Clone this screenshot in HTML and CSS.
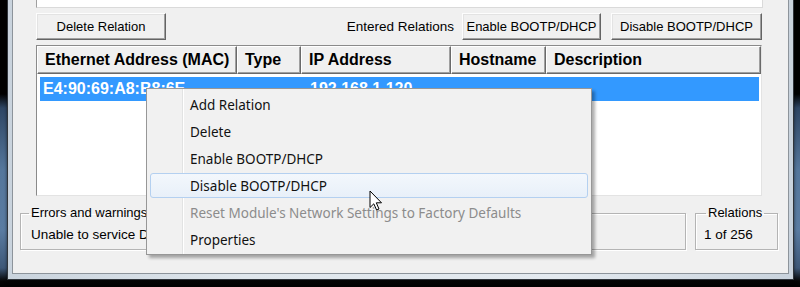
FILE: index.html
```html
<!DOCTYPE html>
<html>
<head>
<meta charset="utf-8">
<title>BOOTP/DHCP Server</title>
<link rel="stylesheet" href="styles.css">
</head>
<body>
<div class="window">
  <div class="client">
    <div class="topbox"></div>
    <div class="toolbar">
      <button class="btn btn-delete">Delete Relation</button>
      <span class="tb-label">Entered Relations</span>
      <button class="btn btn-enable">Enable BOOTP/DHCP</button>
      <button class="btn btn-disable">Disable BOOTP/DHCP</button>
    </div>
    <div class="listview">
      <div class="lv-header">
        <div class="hcell h1">Ethernet Address (MAC)</div>
        <div class="hcell h2">Type</div>
        <div class="hcell h3">IP Address</div>
        <div class="hcell h4">Hostname</div>
        <div class="hcell h5">Description</div>
      </div>
      <div class="lv-row selected">
        <span class="rcell r1">E4:90:69:A8:B8:6E</span>
        <span class="rcell r2"></span>
        <span class="rcell r3">192.168.1.120</span>
      </div>
    </div>
    <div class="status">
      <fieldset class="group errors">
        <legend>Errors and warnings</legend>
        <div class="gtext">Unable to service DHCP request from E4:90:69:A8:B8:6E.</div>
      </fieldset>
      <fieldset class="group relations">
        <legend>Relations</legend>
        <div class="gtext">1 of 256</div>
      </fieldset>
    </div>
  </div>
</div>

<ul class="ctxmenu">
  <li class="mi">Add Relation</li>
  <li class="mi">Delete</li>
  <li class="mi">Enable BOOTP/DHCP</li>
  <li class="mi hover">Disable BOOTP/DHCP</li>
  <li class="mi disabled">Reset Module's Network Settings to Factory Defaults</li>
  <li class="mi">Properties</li>
</ul>

<svg class="cursor" width="14" height="22" viewBox="0 0 14 22">
  <path d="M1 1 L1 17.5 L4.8 13.8 L7.6 20 L10 19 L7.3 12.8 L12.5 12.8 Z" fill="#fff" stroke="#000" stroke-width="1" stroke-linejoin="round"/>
</svg>
</body>
</html>
```

FILE: styles.css
```css
html, body {
  margin: 0;
  padding: 0;
  width: 800px;
  height: 287px;
  overflow: hidden;
}
body {
  position: relative;
  font-family: "Liberation Sans", Arial, sans-serif;
  font-size: 13px;
  color: #000;
  background: linear-gradient(to bottom, #000 0px, #000 94px, #2e4664 108px, #55779c 170px, #5a7ca2 230px, #3e5878 268px, #050505 281px, #000 287px);
}

.window {
  margin-left: 7px;
  width: 787px;
  height: 280px;
  box-sizing: border-box;
  border: 1px solid #30353b;
  border-top: none;
  padding: 0 4px 5px 4px;
  background: linear-gradient(to right, #c9d3dd, #dfe6ec 30%, #e3e9ef 70%, #c9d3dd);
  box-shadow: 0 2px 3px rgba(0,0,0,0.6);
}

.client {
  height: 100%;
  box-sizing: border-box;
  border: 1px solid #8d949b;
  border-top: none;
  background: #f0f0f0;
  display: flex;
  flex-direction: column;
}

.topbox {
  margin-left: 23px;
  width: 727px;
  height: 8px;
  box-sizing: border-box;
  background: #fff;
  border-left: 1px solid #a0a0a0;
  border-right: 1px solid #dadada;
  border-bottom: 1px solid #dadada;
}

.toolbar {
  margin-top: 5px;
  height: 27px;
  display: flex;
  align-items: stretch;
  padding-left: 23px;
  padding-right: 26px;
}

.btn {
  font-family: "Liberation Sans", Arial, sans-serif;
  font-size: 13px;
  color: #000;
  background: #f0f0f0;
  box-sizing: border-box;
  height: 27px;
  padding: 0;
  border: 1px solid;
  border-color: #fdfdfd #646464 #646464 #fdfdfd;
  box-shadow: inset -1px -1px 0 #a0a0a0, inset 1px 1px 0 #e3e3e3;
  border-radius: 0;
}
.btn-delete { width: 130px; }
.btn-enable { width: 139px; }
.btn-disable { width: 151px; margin-left: 10px; }

.tb-label {
  margin-left: auto;
  margin-right: 8px;
  align-self: center;
  font-size: 13.5px;
  line-height: 16px;
}

.listview {
  margin-top: 5px;
  margin-left: 23px;
  width: 726px;
  height: 151px;
  box-sizing: border-box;
  background: #fff;
  border: 1px solid;
  border-color: #8a8a8a #e3e3e3 #e3e3e3 #8a8a8a;
  display: flex;
  flex-direction: column;
}

.lv-header {
  display: flex;
  height: 28px;
  flex: none;
}
.hcell {
  box-sizing: border-box;
  height: 28px;
  background: #f0f0f0;
  border: 1px solid;
  border-color: #fff #6a6a6a #6a6a6a #fff;
  box-shadow: inset -1px -1px 0 #a0a0a0;
  font-weight: bold;
  font-size: 16px;
  line-height: 25px;
  padding-left: 7px;
  white-space: nowrap;
  overflow: hidden;
}
.h1 { width: 200px; }
.h2 { width: 64px; }
.h3 { width: 150px; }
.h4 { width: 95px; }
.h5 { flex: 1; }

.lv-row {
  margin: 3px 2px 0 3px;
  height: 24px;
  display: flex;
  align-items: center;
  font-weight: bold;
  font-size: 16px;
  white-space: nowrap;
}
.lv-row.selected {
  background: #3399ff;
  color: #fff;
}
.rcell { box-sizing: border-box; }
.r1 { width: 197px; padding-left: 3px; }
.r2 { width: 64px; }
.r3 { width: 150px; padding-left: 9px; }

.status {
  margin-top: 10px;
  padding-left: 7px;
  display: flex;
  gap: 9px;
}
.group {
  margin: 0;
  padding: 0;
  box-sizing: border-box;
  height: 44px;
  border: 1px solid #b4b4b4;
  box-shadow: inset 1px 1px 0 #fff, 1px 1px 0 #fff;
  min-width: 0;
}
.group legend {
  font-size: 13px;
  line-height: 14px;
  padding: 0 2px;
  margin-left: 8px;
}
.errors { width: 666px; }
.relations { width: 83px; }
.relations legend { margin-left: 10px; }
.gtext {
  font-size: 13.5px;
  line-height: 16px;
  margin-top: 7px;
  padding-left: 10px;
  white-space: nowrap;
  overflow: hidden;
}
.relations .gtext { padding-left: 8px; }

.ctxmenu {
  position: absolute;
  left: 146px;
  top: 88px;
  width: 446px;
  height: 167px;
  box-sizing: border-box;
  margin: 0;
  padding: 3px 0 0 0;
  list-style: none;
  border: 1px solid #979797;
  background: linear-gradient(to right, #f1f1f1 35px, #e2e3e3 35px, #e2e3e3 36px, #ffffff 36px, #ffffff 37px, #f1f1f1 37px);
  box-shadow: 3px 3px 3px rgba(0,0,0,0.32);
  font-family: "Noto Sans", "Open Sans", sans-serif;
  font-size: 13.5px;
  color: #111;
}
.mi {
  box-sizing: border-box;
  height: 25px;
  margin: 0 3px 2px 3px;
  padding-left: 39px;
  line-height: 25px;
  border: 1px solid transparent;
  border-radius: 3px;
  white-space: nowrap;
}
.mi.hover {
  border-color: #b4d0f0;
  background: linear-gradient(to bottom, #f3f7fc, #e8f0f9);
}
.mi.disabled {
  color: #8c8c8c;
}

.cursor {
  position: absolute;
  left: 369px;
  top: 190px;
}
```
